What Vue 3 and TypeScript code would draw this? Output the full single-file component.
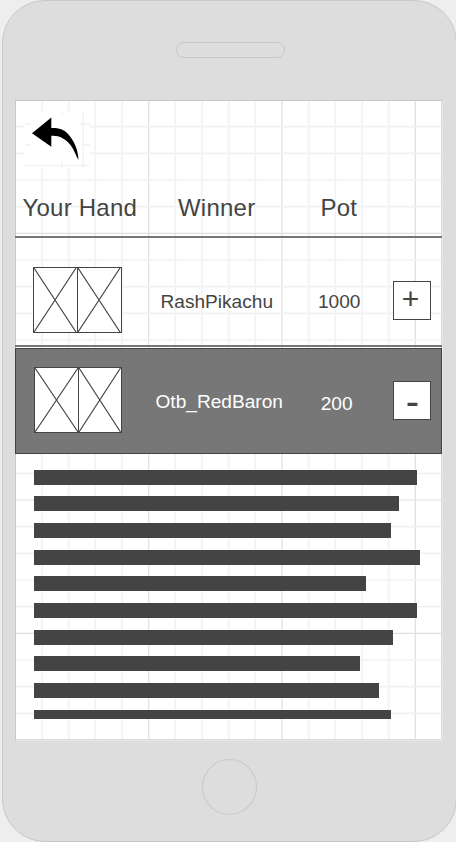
<script setup lang="ts">
interface GridLine {
  pos: number
  major: boolean
}

interface Round {
  winner: string
  pot: string
  open: boolean
}

const STEP = 80 / 3

const verticals: GridLine[] = Array.from({ length: 16 }, (_, i) => ({
  pos: (i + 1) * STEP + 0.33,
  major: (i + 1) % 5 === 0,
}))
const horizontals: GridLine[] = Array.from({ length: 24 }, (_, i) => ({
  pos: (i + 1) * STEP,
  major: (i + 1) % 5 === 0,
}))

const rounds: Round[] = [
  { winner: 'RashPikachu', pot: '1000', open: false },
  { winner: 'Otb_RedBaron', pot: '200', open: true },
]

const details: number[] = [383, 365, 357, 386, 332, 383, 359, 326, 345, 357]
</script>

<template>
  <div class="stage">
    <div class="phone">
      <div class="speaker"></div>
      <main class="screen">
        <svg class="graph" width="428" height="641" viewBox="0 0 428 641">
          <line
            v-for="line in verticals"
            :key="'v' + line.pos"
            :x1="line.pos"
            :x2="line.pos"
            y1="1"
            y2="641"
            :class="line.major ? 'major' : 'minor'"
          />
          <line
            v-for="line in horizontals"
            :key="'h' + line.pos"
            x1="1"
            x2="428"
            :y1="line.pos"
            :y2="line.pos"
            :class="line.major ? 'major' : 'minor'"
          />
          <path class="frame" d="M0 .5H427M.5 0V640" />
          <path class="edge" d="M426.5 1V640M1 639.5H427" />
          <path class="edge-soft" d="M427.5 1V641M1 640.5H428" />
        </svg>

        <header class="toolbar">
          <button class="back" aria-label="Back">
            <svg width="65" height="56" viewBox="0 0 65 56">
              <rect width="65" height="56" fill="#fff" />
              <path
                class="tick"
                d="M37.3 0V3M37.3 50V56M58.3 0V56M0 12.3H6M54 12.3H65M0 32.7H6M56 32.7H65M0 53.5H65"
              />
              <path
                d="M7 21.3L26.3 5.6V16C33 15.800 39 17 43.500 22.500C49 29 53 37 53.500 48C50.500 43 49 37.500 45.500 33C40.500 26.500 34 23.200 26.300 23.700V34.800Z"
                fill="#000"
              />
            </svg>
          </button>
        </header>

        <div class="headings">
          <span class="hand">Your Hand</span>
          <span class="winner">Winner</span>
          <span class="pot">Pot</span>
        </div>

        <div v-for="round in rounds" :key="round.winner" class="round" :class="{ open: round.open }">
          <svg class="cards" width="89" height="66" viewBox="0 0 89 66">
            <template v-if="round.open">
              <rect x="1.500" y="0.5" width="87" height="65" />
              <path d="M45.500 0V66" />
              <path class="cross" d="M2 1L45 65M45 1L2 65M46 1L87.500 65M87.500 1L46 65" />
            </template>
            <template v-else>
              <rect x="0.5" y="0.5" width="88" height="65" />
              <path d="M44.500 0V66" />
              <path class="cross" d="M1 1L43 65M43 1L1 65M45 1L87 65M87 1L45 65" />
            </template>
          </svg>
          <span class="winner">{{ round.winner }}</span>
          <span class="pot">{{ round.pot }}</span>
          <button class="toggle"><span>{{ round.open ? '-' : '+' }}</span></button>
        </div>

        <div class="details">
          <div v-for="(width, i) in details" :key="i" class="bar" :style="{ width: width + 'px' }"></div>
        </div>
      </main>
      <div class="home"></div>
    </div>
  </div>
</template>

<style>
body {
  background: #eee;
  overflow: hidden;
}
</style>

<style scoped>
.stage {
  width: 456px;
  height: 842px;
  overflow: hidden;
  padding-left: 2px;
  box-sizing: border-box;
  font-family: 'Liberation Sans', Arial, sans-serif;
  color: #444;
}
.phone {
  width: 455px;
  height: 842px;
  box-sizing: border-box;
  border: 1px solid #c8c8c8;
  border-radius: 43px;
  background: #ddd;
}
.speaker {
  width: 109px;
  height: 16px;
  box-sizing: border-box;
  margin: 41px 0 42px 173px;
  border: 1px solid #c8c8c8;
  border-radius: 8px;
}
.screen {
  position: relative;
  width: 427px;
  height: 640px;
  margin-left: 12px;
  background: #fff;
}
.graph {
  position: absolute;
  left: 0;
  top: 0;
}
.graph path {
  fill: none;
}
.minor {
  stroke: #f2f2f2;
  stroke-width: 1.7;
}
.major {
  stroke: #dfdfdf;
  stroke-width: 1.2;
}
.frame {
  stroke: #c8c8c8;
}
.edge {
  stroke: #dadada;
}
.edge-soft {
  stroke: #e8e8e8;
}
.toolbar,
.headings,
.round,
.details {
  position: relative;
}
.toolbar {
  height: 84px;
  padding: 12px 0 0 10px;
  box-sizing: border-box;
}
button {
  padding: 0;
  font: inherit;
  color: inherit;
}
.back {
  display: block;
  border: 0;
  background: none;
}
.back svg {
  display: block;
}
.tick {
  stroke: #f2f2f2;
  stroke-width: 1.5;
}
.headings,
.round {
  display: grid;
  white-space: nowrap;
}
.headings {
  grid-template-columns: 155px 143px 129px;
  height: 54px;
  box-sizing: border-box;
  padding-top: 10px;
  border-bottom: 2px solid #777;
  font-size: 24px;
  letter-spacing: 0.22px;
  line-height: 28px;
}
.hand {
  padding-left: 7.5px;
}
.headings .winner {
  padding-left: 8px;
}
.headings .pot {
  padding-left: 7.5px;
}
.round {
  grid-template-columns: 138px 163px 77px 38px;
  height: 109px;
  box-sizing: border-box;
  border-bottom: 2px solid #777;
  font-size: 19.1px;
  line-height: 22px;
}
.cards {
  display: block;
  margin: 29px 0 0 18px;
}
.cards rect {
  fill: #fff;
  stroke: #444;
}
.cards path {
  fill: none;
  stroke: #444;
}
.cards .cross {
  stroke-width: 1.2;
}
.round .winner {
  padding: 53px 0 0 7.5px;
}
.round .pot {
  padding: 53px 0 0 2px;
}
.toggle {
  width: 38px;
  height: 39px;
  margin-top: 43px;
  box-sizing: border-box;
  border: 1px solid #444;
  background: #fff;
  font-size: 30px;
  line-height: 34px;
}
.toggle span {
  display: block;
  height: 37px;
  padding-right: 3px;
}
.round.open {
  height: 106px;
  margin-top: 1px;
  border: 1px solid #444;
  background: #777;
  color: #fff;
}
.open .cards {
  margin: 18px 0 0 17px;
}
.open .winner {
  padding: 42px 0 0 1.500px;
}
.open .pot {
  padding: 44px 0 0 3.700px;
}
.open .toggle {
  margin: 32px 0 0 -1px;
  color: #444;
  font-size: 40px;
  line-height: 38px;
}
.open .toggle span {
  padding: 0 0 0 1px;
}
.details {
  display: flex;
  flex-direction: column;
  gap: 11.667px;
  height: 249.300px;
  margin: 15.700px 0 0 19px;
  overflow: hidden;
}
.bar {
  flex: none;
  height: 15px;
  background: #444;
}
.home {
  width: 55px;
  height: 56px;
  box-sizing: border-box;
  margin: 19px 0 0 199px;
  border: 1px solid #c8c8c8;
  border-radius: 50%;
}
</style>
